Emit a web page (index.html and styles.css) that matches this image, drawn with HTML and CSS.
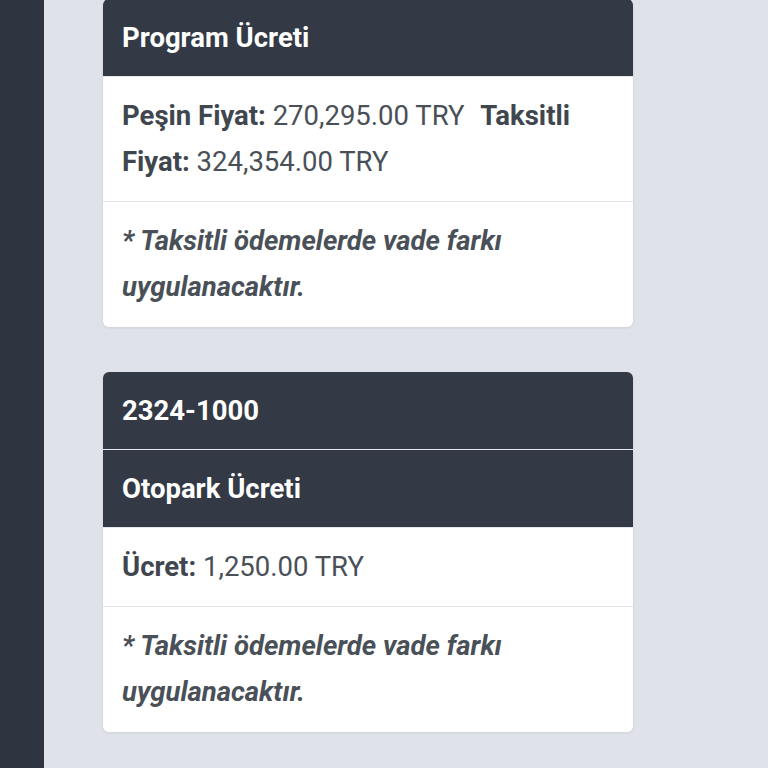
FILE: index.html
```html
<!DOCTYPE html>
<html lang="tr">
<head>
    <meta charset="UTF-8" />
    <meta name="viewport" content="width=device-width, initial-scale=1" />
    <title>Ücretler</title>
    <link rel="stylesheet" href="styles.css">
</head>
<body>

    <div class="side-bar"></div>

    <div class="content">
        <div class="price-card">
            <div class="card-head">Program Ücreti</div>
            <div class="card-row">
                <b>Peşin Fiyat:</b> 270,295.00 TRY <span class="gap"></span><b>Taksitli Fiyat:</b> 324,354.00 TRY
            </div>
            <div class="card-row note">* Taksitli ödemelerde vade farkı uygulanacaktır.</div>
        </div>

        <div class="price-card">
            <div class="card-head">2324-1000</div>
            <div class="card-head">Otopark Ücreti</div>
            <div class="card-row">
                <b>Ücret:</b> 1,250.00 TRY
            </div>
            <div class="card-row note">* Taksitli ödemelerde vade farkı uygulanacaktır.</div>
        </div>
    </div>

</body>
</html>
```

FILE: styles.css
```css
body {
    font-family: Roboto, 'Noto Sans', sans-serif;
    background-color: #dfe2e9;
    display: flex;
    margin: 0;
    padding: 0;
    min-height: 100vh;
    overflow: hidden;
}

.side-bar {
    width: 44px;
    flex-shrink: 0;
    background-color: #2f3540;
}

.content {
    width: 530px;
    margin-left: 59px;
    margin-top: -1px;
}

.price-card {
    background-color: #ffffff;
    border-radius: 6px;
    overflow: hidden;
    box-shadow: 0 1px 3px rgba(0, 0, 0, 0.08);
    margin-bottom: 45px;
}

.card-head {
    background-color: #333a45;
    color: #ffffff;
    font-size: 27.5px;
    font-weight: 700;
    line-height: 45px;
    padding: 16px 19px;
    border-bottom: 1px solid #e4e7ec;
}

.card-row {
    color: #4a5058;
    font-size: 27.5px;
    line-height: 46px;
    padding: 16px 19px;
    border-bottom: 1px solid #e1e4e8;
}

.card-row b {
    color: #40464e;
}

.card-row:last-child {
    border-bottom: none;
}

.gap {
    display: inline-block;
    width: 9px;
}

.note {
    font-style: italic;
    font-weight: 700;
    padding-bottom: 17px;
}
```
